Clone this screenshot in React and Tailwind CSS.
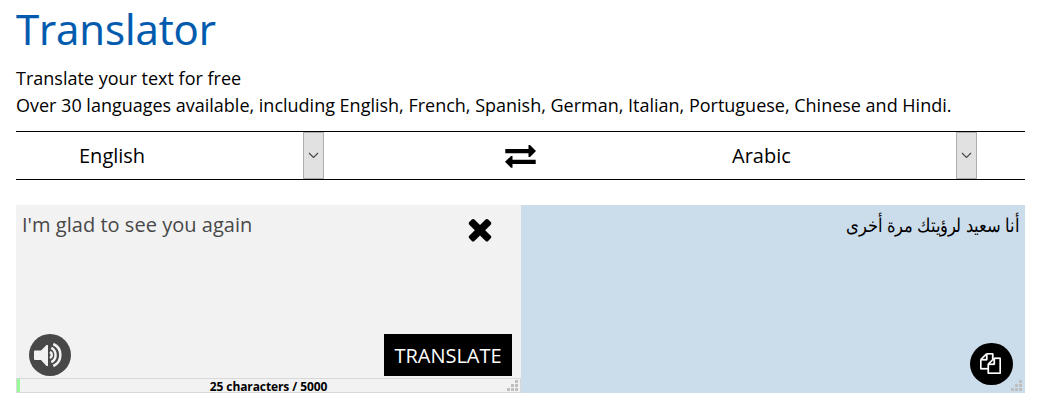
import React from 'react';

function SelectButton() {
  return (
    <button aria-label="Choose language" className="flex h-[47px] w-[21px] shrink-0 items-center justify-center border border-[#adadad] bg-[#e1e1e1]">
      <svg width="11" height="7" viewBox="0 0 11 7" className="shrink-0" fill="none" stroke="#444" strokeWidth="1.1">
        <path d="M1 1l4.5 4.5L10 1" />
      </svg>
    </button>
  );
}

function Grip({ className }) {
  return (
    <svg width="11" height="11" viewBox="0 0 11 11" shapeRendering="crispEdges" className={className} fill="currentColor">
      <path d="M8 0h3v3h-3zM4 4h3v3h-3zM8 4h3v3h-3zM0 8h3v3h-3zM4 8h3v3h-3zM8 8h3v3h-3z" />
    </svg>
  );
}

function SwapIcon() {
  return (
    <svg width="31" height="23" viewBox="0 0 31 23" fill="#000">
      <path d="M0.300 4h23.200V0h1.500L31 6L25 12h-1.500V8.300H0.300zM30.700 14.700H7.500V11H6L0 16.800L6 22.800h1.500V19h23.200z" />
    </svg>
  );
}

function CloseIcon() {
  return (
    <svg width="34" height="34" viewBox="0 0 1792 1792" fill="#000">
      <path d="M1490 1322q0 40-28 68l-136 136q-28 28-68 28t-68-28l-294-294-294 294q-28 28-68 28t-68-28l-136-136q-28-28-28-68t28-68l294-294-294-294q-28-28-28-68t28-68l136-136q28-28 68-28t68 28l294 294 294-294q28-28 68-28t68 28l136 136q28 28 28 68t-28 68l-294 294 294 294q28 28 28 68z" />
    </svg>
  );
}

function SpeakerIcon() {
  return (
    <svg width="42" height="42" viewBox="0 0 42 42">
      <circle cx="21" cy="21" r="21" fill="#484848" />
      <path d="M6 16.500h6L17.500 11H19v21h-1.500L12 26H6q-1 0-1-1v-7.500q0-1 1-1z" fill="#f2f2f2" />
      <g fill="none" stroke="#f2f2f2" strokeWidth="2.5">
        <path d="M21 17.800a3.700 3.700 0 0 1 0 6.400" />
        <path d="M22.300 13.800a8.200 8.200 0 0 1 0 14.400" />
        <path d="M24.300 10a12.100 12.100 0 0 1 0 22" />
      </g>
    </svg>
  );
}

function CopyIcon() {
  return (
    <svg width="21" height="21" viewBox="0 0 1792 1792" fill="#fff" stroke="#fff" strokeWidth="24">
      <path d="M1696 384q40 0 68 28t28 68v1216q0 40-28 68t-68 28h-960q-40 0-68-28t-28-68v-288h-544q-40 0-68-28t-28-68v-672q0-40 20-88t48-76l408-408q28-28 76-48t88-20h416q40 0 68 28t28 68v328q68-40 128-40h416zm-544 213l-299 299h299v-299zm-640-384l-299 299h299v-299zm196 647l316-316v-416h-384v416q0 40-28 68t-68 28h-416v640h512v-256q0-40 20-88t48-76zm956 804v-1152h-384v416q0 40-28 68t-68 28h-416v640h896z" />
    </svg>
  );
}

export default function App() {
  return (
    <main className="h-[405px] w-[1042px] overflow-hidden bg-white pr-[17px] pl-4 font-['Open_Sans',sans-serif] text-black">
      <h1 className="h-[65px] text-[42px] leading-[57px] font-normal tracking-[-0.1px] whitespace-nowrap text-[#005bae] [-webkit-text-stroke:0.2px_#005bae]">Translator</h1>
      <div className="h-[66px] text-[18px] leading-[27px] whitespace-nowrap">
        <p>Translate your text for free</p>
        <p className="tracking-[-0.006px]">Over 30 languages available, including English, French, Spanish, German, Italian, Portuguese, Chinese and Hindi.</p>
      </div>
      <div className="flex h-[49px] items-center border-y border-black text-[20px]">
        <span className="w-[287px] pl-[63px]">English</span>
        <SelectButton />
        <button aria-label="Swap languages" className="mt-[2px] ml-[181px]"><SwapIcon /></button>
        <span className="w-[420px] pl-[196px]">Arabic</span>
        <SelectButton />
      </div>
      <div className="mt-[25px] flex h-[188px]">
        <section className="flex w-[505px] flex-col bg-[#f2f2f2]">
          <div className="flex h-[129px] justify-between pr-[24px] pl-[6px]">
            <p className="pt-[5px] text-[20px] leading-[30px] tracking-[0.03px] text-[#484848]">I'm glad to see you again</p>
            <button aria-label="Clear text" className="mt-[7px] h-[34px] w-[34px]"><CloseIcon /></button>
          </div>
          <div className="flex h-[44px] items-start justify-between pr-[9px] pl-[13px]">
            <button aria-label="Listen"><SpeakerIcon /></button>
            <button className="h-[42px] w-[128px] bg-black pt-px text-[20px] leading-[42px] whitespace-nowrap text-white">TRANSLATE</button>
          </div>
          <div className="flex h-[15px] border border-[#d8d8d8]">
            <div className="w-[3px] bg-[#98fb98]" />
            <p className="w-[497px] text-center text-[12px] leading-[15px] font-bold tracking-[-0.1px]">25 characters / 5000</p>
            <Grip className="-ml-[10px] mt-px shrink-0 text-[#bfbfbf]" />
          </div>
        </section>
        <section className="flex flex-1 flex-col justify-between bg-[#cbdceb]">
          <p dir="rtl" lang="ar" className="origin-right scale-x-[0.86] pt-[5px] pr-[7px] text-[19px] leading-[30px] whitespace-nowrap">أنا سعيد لرؤيتك مرة أخرى</p>
          <div className="flex items-end justify-end pr-[3px]">
            <button aria-label="Copy translation" className="mb-[8px] flex h-[42px] w-[43px] items-center justify-center rounded-full bg-black pr-[2px] pb-px"><CopyIcon /></button>
            <Grip className="mb-[2px] -ml-[2px] text-[#bfbfbf]" />
          </div>
        </section>
      </div>
    </main>
  );
}
